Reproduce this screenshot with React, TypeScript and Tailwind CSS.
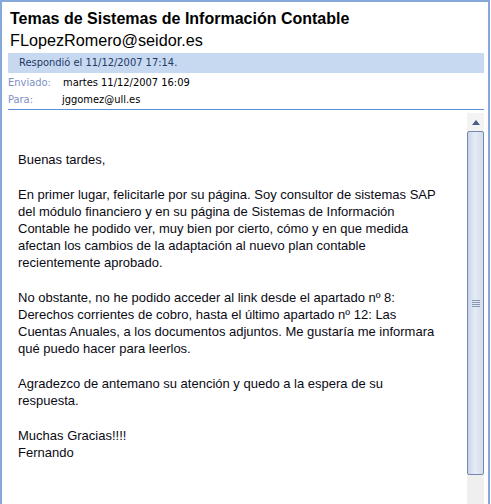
import React from "react";

export default function App() {
  const paragraphs: React.ReactNode[] = [
    <>Buenas tardes,</>,
    <>
      En primer lugar, felicitarle por su página. Soy consultor de sistemas SAP
      <br />
      del módulo financiero y en su página de Sistemas de Información
      <br />
      Contable he podido ver, muy bien por cierto, cómo y en que medida
      <br />
      afectan los cambios de la adaptación al nuevo plan contable
      <br />
      recientemente aprobado.
    </>,
    <>
      No obstante, no he podido acceder al link desde el apartado nº 8:
      <br />
      Derechos corrientes de cobro, hasta el último apartado nº 12: Las
      <br />
      Cuentas Anuales, a los documentos adjuntos. Me gustaría me informara
      <br />
      qué puedo hacer para leerlos.
    </>,
    <>
      Agradezco de antemano su atención y quedo a la espera de su
      <br />
      respuesta.
    </>,
    <>
      Muchas Gracias!!!!
      <br />
      Fernando
    </>,
  ];

  return (
    <div className="w-[491px] h-[504px] bg-white overflow-hidden font-['Liberation_Sans',Arial,sans-serif]">
      <div className="w-[490px] h-[504px] border-l-2 border-t-2 border-r-2 border-[#86a9db] flex flex-col">
        {/* Header */}
        <div className="pl-[8px] pt-[7px] text-[16px] leading-[20px] font-bold text-black whitespace-nowrap">
          Temas de Sistemas de Información Contable
        </div>
        <div className="pl-[8px] text-[16.2px] leading-[22px] text-black whitespace-nowrap">
          FLopezRomero@seidor.es
        </div>
        <div className="ml-[6px] mr-[4px] mt-[2px] h-[20px] bg-[#c6d9f1] pl-[11px] flex items-center text-[11px] text-[#1f3864] font-['DejaVu_Sans_Condensed','DejaVu_Sans',sans-serif] whitespace-nowrap">
          Respondió el 11/12/2007 17:14.
        </div>
        <div className="ml-[6px] mr-[4px] mt-[2px] text-[11px] font-['DejaVu_Sans_Condensed','DejaVu_Sans',sans-serif]">
          <div className="h-[17px] flex items-center">
            <span className="w-[55px] text-[#7d8fc4]">Enviado:</span>
            <span className="text-black">martes 11/12/2007 16:09</span>
          </div>
          <div className="h-[17px] flex items-center">
            <span className="w-[54px] text-[#7d8fc4]">Para:</span>
            <span className="text-black">jggomez@ull.es</span>
          </div>
        </div>
        <div className="ml-[6px] mr-[4px] h-[1px] bg-[#5b8fd6]" />

        {/* Body */}
        <div className="flex-1 flex min-h-0">
          <div className="flex-1 pl-[16px] pt-[41px] text-[13px] leading-[17px] text-[#0a0a14] flex flex-col gap-[18px] whitespace-nowrap">
            {paragraphs.map((p, i) => (
              <p key={i}>{p}</p>
            ))}
          </div>
          {/* Scrollbar */}
          <div className="w-[17px] mr-[4px] mt-[3px] bg-[#f3f3f3] flex flex-col">
            <div className="h-[18px] flex items-center justify-center">
              <svg width="8" height="5" viewBox="0 0 8 5">
                <polygon points="0,5 8,5 4,0" fill="#4a5d82" />
              </svg>
            </div>
            <div className="h-[344px] border border-[#7688ab] rounded-[2px] bg-[linear-gradient(to_right,#c9d4e9,#e6ecf6_45%,#d3dcee)] flex items-center justify-center">
              <div className="flex flex-col gap-[1px]">
                <div className="w-[8px] h-[1px] bg-[#8a98b6]" />
                <div className="w-[8px] h-[1px] bg-[#8a98b6]" />
                <div className="w-[8px] h-[1px] bg-[#8a98b6]" />
                <div className="w-[8px] h-[1px] bg-[#8a98b6]" />
              </div>
            </div>
            <div className="flex-1 bg-[#efefef]" />
          </div>
        </div>
      </div>
    </div>
  );
}
